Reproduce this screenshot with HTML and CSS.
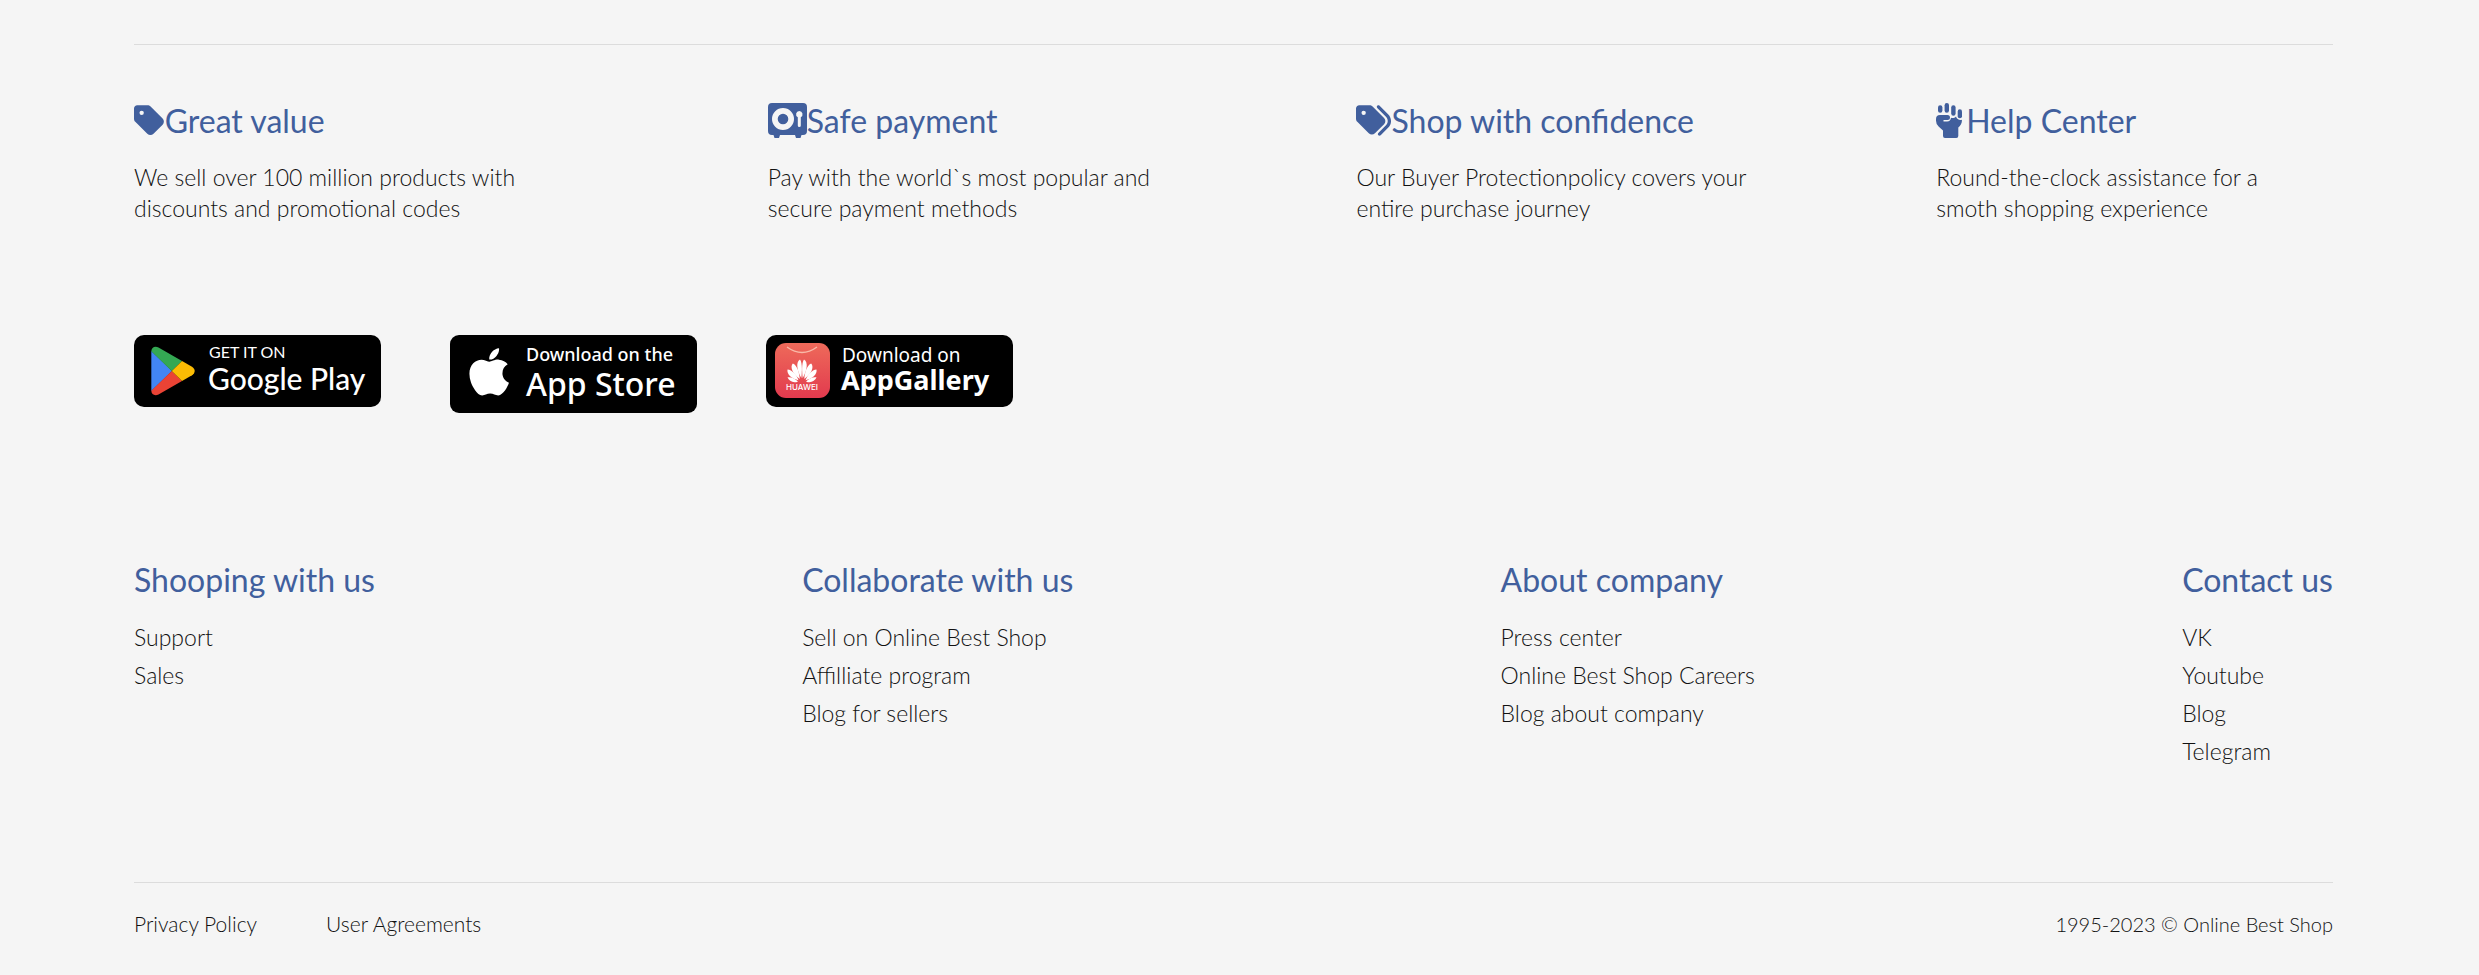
FILE: index.html
```html
<!DOCTYPE html>
<html lang="en">
<head>
<meta charset="utf-8">
<title>Online Best Shop</title>
<link rel="stylesheet" href="styles.css">
</head>
<body>
<footer class="footer">
  <section class="benefits">
    <article class="benefit">
      <h2 class="title"><svg class="icon" viewBox="0 0 448 512" aria-hidden="true"><path d="M0 80V229.500c0 17 6.700 33.300 18.700 45.300l176 176c25 25 65.500 25 90.500 0L418.700 317.300c25-25 25-65.500 0-90.500l-176-176c-12-12-28.300-18.700-45.300-18.700H48C21.500 32 0 53.500 0 80zm112 32a32 32 0 1 1 0 64 32 32 0 1 1 0-64z"/></svg>Great value</h2>
      <p class="text">We sell over 100 million products with<br>discounts and promotional codes</p>
    </article>
    <article class="benefit">
      <h2 class="title"><svg class="icon" viewBox="0 0 39 35" aria-hidden="true"><path fill-rule="evenodd" d="M4 0H35a4 4 0 0 1 4 4V28a4 4 0 0 1-4 4H33.500L32.500 35H28L27 32H12L11 35H6.500L5.500 32H4a4 4 0 0 1-4-4V4a4 4 0 0 1 4-4ZM15 5a11 11 0 1 0 0 22a11 11 0 0 0 0-22ZM15 10.700a5.300 5.300 0 1 1 0 10.600a5.300 5.300 0 0 1 0-10.600ZM31.300 8a3.300 3.300 0 0 0-1.500 6.200V22.500a1.500 1.500 0 0 0 3 0V14.200A3.300 3.300 0 0 0 31.300 8Z"/></svg>Safe payment</h2>
      <p class="text">Pay with the world`s most popular and<br>secure payment methods</p>
    </article>
    <article class="benefit">
      <h2 class="title"><svg class="icon" viewBox="0 0 512 512" aria-hidden="true"><path d="M345 39.100L472.800 168.400c52.400 53 52.400 138.200 0 191.200L360.800 472.900c-9.300 9.400-24.500 9.500-33.900 .2s-9.500-24.500-.2-33.900L438.600 325.900c33.900-34.300 33.900-89.400 0-123.700L310.900 72.900c-9.300-9.400-9.200-24.600 .2-33.900s24.600-9.200 33.900 .2zM0 229.500V80C0 53.500 21.500 32 48 32H197.500c17 0 33.300 6.700 45.300 18.700l168 168c25 25 25 65.500 0 90.500L277.300 442.700c-25 25-65.500 25-90.500 0l-168-168C6.700 262.700 0 246.500 0 229.500zM144 144a32 32 0 1 0 -64 0 32 32 0 1 0 64 0z"/></svg>Shop with confidence</h2>
      <p class="text">Our Buyer Protectionpolicy covers your<br>entire purchase journey</p>
    </article>
    <article class="benefit">
      <h2 class="title"><svg class="icon" viewBox="0 0 30 35" aria-hidden="true"><rect x="2" y="2.200" width="4.400" height="7.600" rx="2.200"/><rect x="8.600" y="0" width="4.400" height="9.800" rx="2.200"/><rect x="15.200" y="2.200" width="4.400" height="10.600" rx="2.200"/><rect x="21.700" y="6.300" width="4.300" height="9" rx="2.100"/><path d="M4 12H11.500a2.500 2.500 0 0 1 0 5H7.500V18.400H11a4 4 0 0 0 4-3.600c1.500 .6 3.700 .2 5-1.300c.7 2.600 3.500 4.200 6 3.300c0 3.500-1.400 5.600-3.700 7.800V33a2 2 0 0 1-2 2H9a2 2 0 0 1-2-2V27.500L2.600 23.500A8 8 0 0 1 0 17.500V16a4 4 0 0 1 4-4Z"/></svg>Help Center</h2>
      <p class="text">Round-the-clock assistance for a<br>smoth shopping experience</p>
    </article>
  </section>

  <nav class="stores" aria-label="Mobile apps">
    <a class="store" href="#" aria-label="Get it on Google Play">
      <svg class="badge" viewBox="0 0 247 72">
        <rect width="247" height="72" rx="10"/>
        <path fill="#4285f4" d="M17.300 16V56L38 36Z"/>
        <path fill="#34a853" d="M17.300 16.500C17.300 12.500 21 10.600 24.500 12.600L48 26L37.700 36L17.500 16.500Z"/>
        <path fill="#ea4335" d="M17.300 55.500C17.300 59.500 21 61.400 24.500 59.400L48 46L37.700 36L17.500 55.500Z"/>
        <path fill="#fbbc04" d="M48 26L58 31.800C61.600 34 61.600 38 58 40.200L48 46L37.700 36Z"/>
        <text class="play-small" x="75" y="23">GET IT ON</text>
        <text class="play-big" x="74" y="55">Google Play</text>
      </svg>
    </a>
    <a class="store" href="#" aria-label="Download on the App Store">
      <svg class="badge" viewBox="0 0 247 78">
        <rect width="247" height="78" rx="9"/>
        <path fill="#fff" transform="translate(19 10) scale(.105)" d="M318.700 268.700c-.2-36.700 16.400-64.400 50-84.800-18.800-26.900-47.200-41.700-84.700-44.600-35.500-2.800-74.300 20.700-88.500 20.700-15 0-49.400-19.700-76.400-19.700C63.300 141.200 4 184.800 4 273.500q0 39.300 14.400 81.200c12.800 36.700 59 126.700 107.200 125.200 25.200-.6 43-17.900 75.800-17.900 31.800 0 48.300 17.900 76.400 17.900 48.600-.7 90.400-82.500 102.600-119.300-65.200-30.700-61.700-90-61.700-91.900zm-56.600-164.200c27.300-32.400 24.800-61.900 24-72.500-24.100 1.400-52 16.400-67.900 34.900-17.500 19.800-27.800 44.300-25.600 71.900 26.100 2 49.900-11.400 69.500-34.300z"/>
        <text class="apple-small" x="76" y="26">Download on the</text>
        <text class="apple-big" x="76" y="61">App Store</text>
      </svg>
    </a>
    <a class="store" href="#" aria-label="Download on AppGallery">
      <svg class="badge" viewBox="0 0 247 72">
        <defs><linearGradient id="red" x1="0" y1="0" x2="0" y2="1"><stop offset="0" stop-color="#ee6a5a"/><stop offset="1" stop-color="#e23a4e"/></linearGradient></defs>
        <rect width="247" height="72" rx="10"/>
        <rect x="9" y="8" width="55" height="55" rx="11" fill="url(#red)"/>
        <path d="M21 12Q36 23 51 12" fill="none" stroke="#f9b9a8" stroke-width="1.300"/>
        <g fill="#fff">
          <path d="M35.300 43C31 36 29.500 27 34 24.500C36.500 28 36 37 35.300 43Z"/>
          <path d="M33.700 44C27 39 23.500 32.500 26.800 28.500C31 30 33.500 38 33.700 44Z"/>
          <path d="M32.500 45.200C26 44 20.500 39.500 21.500 34.500C26 34.500 31 40.500 32.500 45.200Z"/>
          <path d="M32 46.400C28 48.500 23 46.500 21.500 42.300C25 41.500 29.500 44 32 46.400Z"/>
          <path d="M36.700 43C41 36 42.500 27 38 24.500C35.500 28 36 37 36.700 43Z"/>
          <path d="M38.300 44C45 39 48.500 32.500 45.200 28.500C41 30 38.500 38 38.300 44Z"/>
          <path d="M39.500 45.200C46 44 51.500 39.500 50.500 34.500C46 34.500 41 40.500 39.500 45.200Z"/>
          <path d="M40 46.400C44 48.500 49 46.500 50.500 42.300C47 41.500 42.500 44 40 46.400Z"/>
        </g>
        <text class="huawei" x="36" y="55">HUAWEI</text>
        <text class="gallery-small" x="76" y="27">Download on</text>
        <text class="gallery-big" x="75" y="55">AppGallery</text>
      </svg>
    </a>
  </nav>

  <nav class="links" aria-label="Site">
    <section>
      <h2 class="title">Shooping with us</h2>
      <ul class="list">
        <li><a href="#">Support</a></li>
        <li><a href="#">Sales</a></li>
      </ul>
    </section>
    <section>
      <h2 class="title">Collaborate with us</h2>
      <ul class="list">
        <li><a href="#">Sell on Online Best Shop</a></li>
        <li><a href="#">Affilliate program</a></li>
        <li><a href="#">Blog for sellers</a></li>
      </ul>
    </section>
    <section>
      <h2 class="title">About company</h2>
      <ul class="list">
        <li><a href="#">Press center</a></li>
        <li><a href="#">Online Best Shop Careers</a></li>
        <li><a href="#">Blog about company</a></li>
      </ul>
    </section>
    <section>
      <h2 class="title">Contact us</h2>
      <ul class="list">
        <li><a href="#">VK</a></li>
        <li><a href="#">Youtube</a></li>
        <li><a href="#">Blog</a></li>
        <li><a href="#">Telegram</a></li>
      </ul>
    </section>
  </nav>

  <div class="legal">
    <a href="#">Privacy Policy</a>
    <a href="#">User Agreements</a>
    <span class="copyright">1995-2023 © Online Best Shop</span>
  </div>
</footer>
</body>
</html>
```
FILE: styles.css
```css
* {
  box-sizing: border-box;
}

body {
  margin: 0;
  background: #f5f5f5;
  color: #111;
  font-family: Corbel, Lato, "Open Sans", sans-serif;
  font-weight: 300;
}

a {
  color: inherit;
  text-decoration: none;
}

.footer {
  padding: 44px 146px 28px 134px;
}

.benefits {
  display: grid;
  grid-template-columns: 634fr 589fr 580fr 397fr;
  padding-top: 54px;
  border-top: 1px solid #dcdcdc;
}

.title {
  display: flex;
  margin: 0;
  color: #415f9d;
  font-size: 32px;
  font-weight: 400;
  line-height: 44px;
}

.icon {
  height: 35px;
  margin-top: 4px;
  fill: currentColor;
}

.text {
  margin: 19px 0 0;
  font-size: 23px;
  line-height: 31px;
}

.stores {
  display: flex;
  align-items: flex-start;
  gap: 69px;
  margin-top: 111px;
}

.store {
  width: 247px;
}

.badge {
  display: block;
  width: 100%;
}

.badge text {
  fill: #fff;
}

.play-small {
  font: 400 16px Lato, sans-serif;
}

.play-big {
  font: 500 30px Lato, sans-serif;
}

.apple-small {
  font: 500 18px "Noto Sans", sans-serif;
}

.apple-big {
  font: 500 32px "Noto Sans", sans-serif;
}

.gallery-small {
  font: 400 19px "Noto Sans", sans-serif;
}

.gallery-big {
  font: 700 27px "Noto Sans", sans-serif;
}

.huawei {
  font: 500 8px Inter, sans-serif;
  text-anchor: middle;
}

.links {
  display: flex;
  justify-content: space-between;
  margin-top: 145px;
}

.list {
  margin: 16px 0 0;
  padding: 0;
  font-size: 23px;
  line-height: 38px;
  list-style: none;
}

.legal {
  display: flex;
  gap: 69px;
  margin-top: 112px;
  padding-top: 27px;
  border-top: 1px solid #dcdcdc;
  font-size: 21px;
  line-height: 28px;
}

.copyright {
  margin-left: auto;
  font-size: 20px;
}
```
